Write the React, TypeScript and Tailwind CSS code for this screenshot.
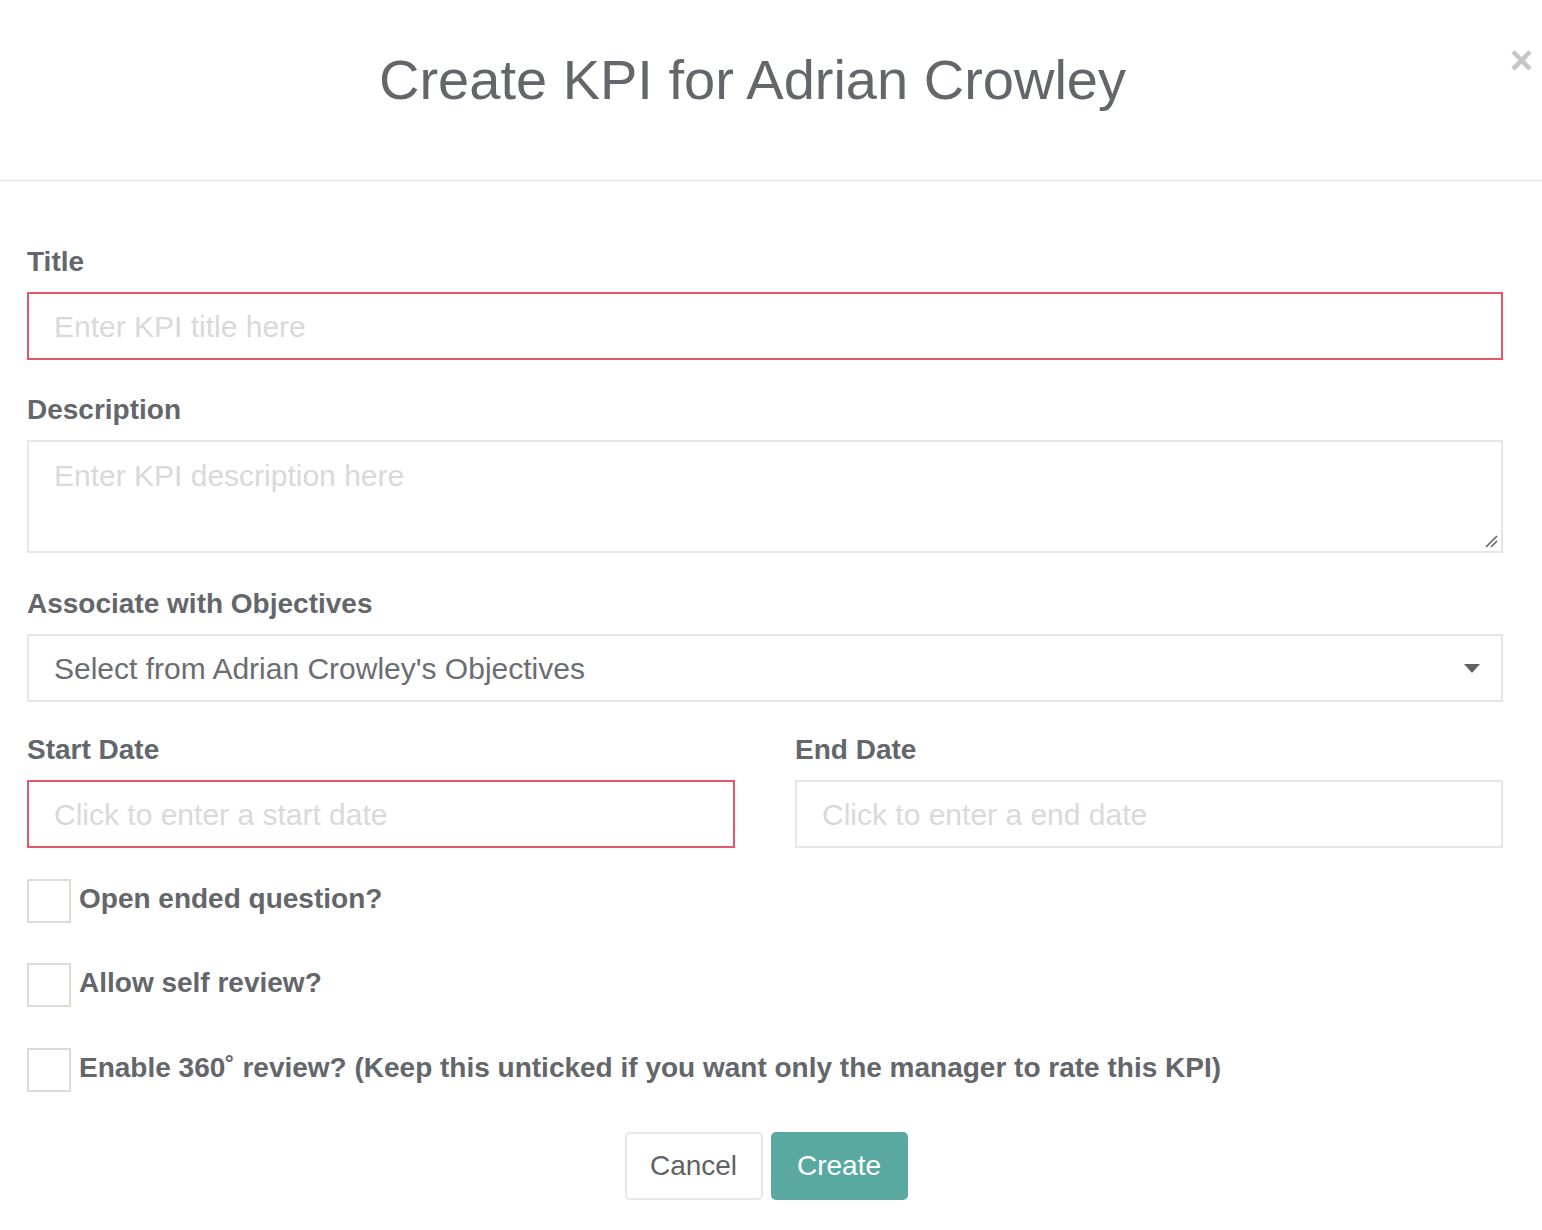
import React from "react";

const font = { fontFamily: '"Liberation Sans", Arial, Helvetica, sans-serif' };

function Label({ children }: { children: React.ReactNode }) {
  return (
    <div className="text-[28px] leading-[30px] font-bold text-[#63666a] mb-[15px]">{children}</div>
  );
}

function Check({ label, mt }: { label: React.ReactNode; mt: string }) {
  return (
    <div className={`flex items-center ${mt}`}>
      <div className="w-[44px] h-[44px] border-2 border-[#dedbd6] bg-white shrink-0" />
      <div className="ml-[8px] text-[28px] leading-[30px] font-bold text-[#63666a] -mt-[5px]">{label}</div>
    </div>
  );
}

export default function App() {
  return (
    <div className="w-[1542px] h-[1230px] bg-white relative overflow-hidden" style={font}>
      <div className="h-[181px] border-b border-[#e3e3e3] flex justify-center">
        <h1 className="text-[56px] leading-[70px] text-[#63666a] mt-[45px] ml-[-37px]">Create KPI for Adrian Crowley</h1>
      </div>
      <button className="absolute right-[9px] top-[40px] text-[40px] leading-[40px] font-bold text-[#c6c6c6]">×</button>

      <div className="pl-[27px] pr-[39px] pt-[66px]">
        <Label>Title</Label>
        <div className="h-[68px] border-2 border-[#e8566a] flex items-center px-[25px] text-[30px] text-[#d9d9d9]">
          Enter KPI title here
        </div>

        <div className="mt-[35px]">
          <Label>Description</Label>
          <div className="h-[113px] border-2 border-[#e6e6e6] px-[25px] pt-[16px] text-[30px] leading-[36px] text-[#d9d9d9] relative">
            Enter KPI description here
            <svg className="absolute right-[3px] bottom-[3px]" width="14" height="14" viewBox="0 0 14 14">
              <path d="M2 13 L13 2 M7 13 L13 7" stroke="#666" strokeWidth="1.6" />
            </svg>
          </div>
        </div>

        <div className="mt-[36px]">
          <Label>Associate with Objectives</Label>
          <div className="h-[68px] border-2 border-[#e6e6e6] flex items-center justify-between pl-[25px] pr-[21px] text-[30px] text-[#6a6d71]">
            <span>Select from Adrian Crowley's Objectives</span>
            <svg width="16" height="9" viewBox="0 0 16 9">
              <path d="M0 0 H16 L8 9 Z" fill="#5f6266" />
            </svg>
          </div>
        </div>

        <div className="mt-[33px] grid grid-cols-2 gap-[60px]">
          <div>
            <Label>Start Date</Label>
            <div className="h-[68px] border-2 border-[#e8566a] flex items-center px-[25px] text-[30px] text-[#d9d9d9]">
              Click to enter a start date
            </div>
          </div>
          <div>
            <Label>End Date</Label>
            <div className="h-[68px] border-2 border-[#e6e6e6] flex items-center px-[25px] text-[30px] text-[#d9d9d9]">
              Click to enter a end date
            </div>
          </div>
        </div>

        <Check mt="mt-[31px]" label="Open ended question?" />
        <Check mt="mt-[40px]" label="Allow self review?" />
        <Check
          mt="mt-[41px]"
          label={<>Enable 360˚ review? (Keep this unticked if you want only the manager to rate this KPI)</>}
        />

        <div className="mt-[40px] flex justify-center gap-[8px] ml-[2px]">
          <button className="w-[138px] h-[68px] rounded-[5px] border-2 border-[#e6e7e8] bg-white text-[28px] text-[#5f6266]">
            Cancel
          </button>
          <button className="w-[137px] h-[68px] rounded-[5px] bg-[#5aa9a0] text-[28px] text-white">
            Create
          </button>
        </div>
      </div>
    </div>
  );
}
